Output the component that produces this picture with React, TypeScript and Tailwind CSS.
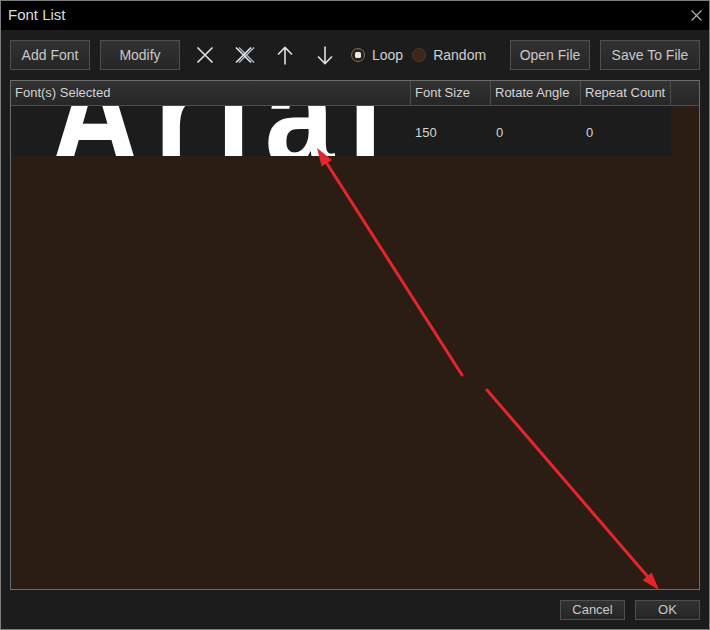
import React from "react";

const F = { fontFamily: '"Liberation Sans", Arial, sans-serif' };

function Btn({ w, h, label, size }: { w: string; h: string; label: string; size: string }) {
  return (
    <button
      className={`${w} ${h} ${size} flex items-center justify-center border border-[#4f4f4f] bg-gradient-to-b from-[#323232] to-[#262626] text-[#c8c8c8]`}
      style={F}
    >
      {label}
    </button>
  );
}

export default function App() {
  return (
    <div className="relative w-[710px] h-[630px] border border-[#7c7c7c] bg-[#1c1c1c] flex flex-col" style={F}>
      {/* Title bar */}
      <div className="h-[29px] bg-black flex items-center justify-between pl-[7px] pr-[7px]">
        <span className="text-[15px] text-[#dedede]">Font List</span>
        <svg width="11" height="11" viewBox="0 0 11 11">
          <path d="M0.5 0.5 L10.5 10.5 M10.5 0.5 L0.5 10.5" stroke="#b5b5b5" strokeWidth="1.1" />
        </svg>
      </div>

      {/* Toolbar */}
      <div className="mt-[10px] h-[30px] flex items-center px-[9px]">
        <Btn w="w-[80px]" h="h-[30px]" size="text-[14px]" label="Add Font" />
        <div className="w-[10px]" />
        <Btn w="w-[80px]" h="h-[30px]" size="text-[14px]" label="Modify" />
        <div className="ml-[5px] flex">
          <div className="w-[40px] h-[30px] flex items-center justify-center">
            <svg width="18" height="18" viewBox="0 0 18 18">
              <path d="M1.5 1.5 L16.5 16.5 M16.5 1.5 L1.5 16.5" stroke="#e0e0e0" strokeWidth="1.6" />
            </svg>
          </div>
          <div className="w-[40px] h-[30px] flex items-center justify-center">
            <svg width="22" height="18" viewBox="0 0 22 18">
              <path d="M5 1.5 L20 16.5 M20 1.5 L5 16.5" stroke="#9fb4c8" strokeWidth="1.6" />
              <path d="M2 1.5 L17 16.5 M17 1.5 L2 16.5" stroke="#e6e6e6" strokeWidth="1.6" />
            </svg>
          </div>
          <div className="w-[40px] h-[30px] flex items-center justify-center">
            <svg width="16" height="19" viewBox="0 0 16 19">
              <path d="M8 1.5 L8 18.5 M1 8.5 L8 1.5 L15 8.5" stroke="#e0e0e0" strokeWidth="1.6" fill="none" />
            </svg>
          </div>
          <div className="w-[40px] h-[30px] flex items-center justify-center">
            <svg width="16" height="19" viewBox="0 0 16 19">
              <path d="M8 0.5 L8 17.5 M1 10.5 L8 17.5 L15 10.5" stroke="#e0e0e0" strokeWidth="1.6" fill="none" />
            </svg>
          </div>
        </div>
        <div className="ml-[6px] w-[14px] h-[14px] rounded-full border border-[#7e6f62] bg-[#2c2119] flex items-center justify-center">
          <div className="w-[6px] h-[6px] rounded-[1.5px] bg-[#e8e8e8]" />
        </div>
        <span className="ml-[7px] text-[14px] text-[#cfcfcf]">Loop</span>
        <div className="ml-[9px] w-[14px] h-[14px] rounded-full border border-[#4a3a2d] bg-[#3b2818]" />
        <span className="ml-[7px] text-[14px] text-[#cfcfcf]">Random</span>
        <div className="ml-auto flex">
          <Btn w="w-[80px]" h="h-[30px]" size="text-[14px]" label="Open File" />
          <div className="w-[10px]" />
          <Btn w="w-[100px]" h="h-[30px]" size="text-[14px]" label="Save To File" />
        </div>
      </div>

      {/* Table */}
      <div className="mt-[10px] mx-[9px] h-[510px] border border-[#6c6c6c] bg-[#2b1d13] flex flex-col">
        <div className="h-[25px] flex border-b border-[#4e4e4e] bg-gradient-to-b from-[#333333] to-[#262626] text-[13px] text-[#d4d4d4]">
          <div className="w-[400px] border-r border-[#4e4e4e] pl-[4px] flex items-center">Font(s) Selected</div>
          <div className="w-[80px] border-r border-[#4e4e4e] pl-[4px] flex items-center">Font Size</div>
          <div className="w-[90px] border-r border-[#4e4e4e] pl-[4px] flex items-center">Rotate Angle</div>
          <div className="w-[90px] border-r border-[#4e4e4e] pl-[4px] flex items-center">Repeat Count</div>
          <div className="flex-1" />
        </div>
        <div className="w-[660px] h-[50px] flex bg-[#1c1c1c] text-[13px] text-[#d4d4d4]">
          <div className="w-[400px] h-[50px] overflow-hidden pl-[39px]">
            <div
              className="mt-[-67px] origin-left scale-x-[0.833] text-[150px] leading-none font-bold text-white tracking-[16.5px] whitespace-nowrap"
              style={F}
            >
              Arial
            </div>
          </div>
          <div className="w-[80px] pl-[4px] pt-[3px] flex items-center">150</div>
          <div className="w-[90px] pl-[5px] pt-[3px] flex items-center">0</div>
          <div className="w-[90px] pl-[5px] pt-[3px] flex items-center">0</div>
        </div>
      </div>

      {/* Bottom buttons */}
      <div className="mt-[10px] h-[20px] flex justify-end px-[9px]">
        <Btn w="w-[65px]" h="h-[20px]" size="text-[13px]" label="Cancel" />
        <div className="w-[10px]" />
        <Btn w="w-[65px]" h="h-[20px]" size="text-[13px]" label="OK" />
      </div>

      {/* Red annotation arrows */}
      <svg className="absolute left-[-1px] top-[-1px] pointer-events-none" width="710" height="630" viewBox="0 0 710 630">
        <line x1="462" y1="375" x2="326" y2="162" stroke="#e3262c" strokeWidth="3" strokeLinecap="round" />
        <polygon points="317,148 332,160 321.6,166.4" fill="#e3262c" />
        <line x1="487" y1="390" x2="648" y2="577" stroke="#e3262c" strokeWidth="3" strokeLinecap="round" />
        <polygon points="659,590 642.7,580.3 651.7,572.5" fill="#e3262c" />
      </svg>
    </div>
  );
}
